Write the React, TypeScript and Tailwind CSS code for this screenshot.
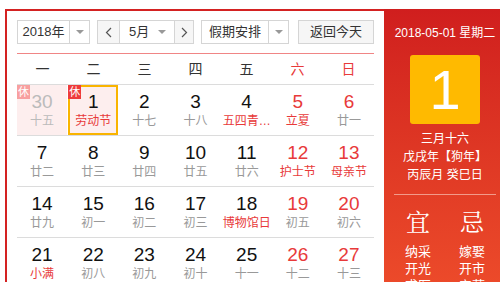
import React from "react";

type Cell = {
  d: number;
  l: string;
  red?: boolean;
  lred?: boolean;
  dim?: boolean;
  rest?: "light" | "strong";
  sel?: boolean;
};

const rows: Cell[][] = [
  [
    { d: 30, l: "十五", dim: true, rest: "light" },
    { d: 1, l: "劳动节", lred: true, rest: "strong", sel: true },
    { d: 2, l: "十七" },
    { d: 3, l: "十八" },
    { d: 4, l: "五四青…", lred: true },
    { d: 5, l: "立夏", red: true, lred: true },
    { d: 6, l: "廿一", red: true },
  ],
  [
    { d: 7, l: "廿二" },
    { d: 8, l: "廿三" },
    { d: 9, l: "廿四" },
    { d: 10, l: "廿五" },
    { d: 11, l: "廿六" },
    { d: 12, l: "护士节", red: true, lred: true },
    { d: 13, l: "母亲节", red: true, lred: true },
  ],
  [
    { d: 14, l: "廿九" },
    { d: 15, l: "初一" },
    { d: 16, l: "初二" },
    { d: 17, l: "初三" },
    { d: 18, l: "博物馆日", lred: true },
    { d: 19, l: "初五", red: true },
    { d: 20, l: "初六", red: true },
  ],
  [
    { d: 21, l: "小满", lred: true },
    { d: 22, l: "初八" },
    { d: 23, l: "初九" },
    { d: 24, l: "初十" },
    { d: 25, l: "十一" },
    { d: 26, l: "十二", red: true },
    { d: 27, l: "十三", red: true },
  ],
];

const weeks = ["一", "二", "三", "四", "五", "六", "日"];

function Caret() {
  return (
    <svg width="8" height="5" viewBox="0 0 8 5">
      <path d="M0 0 L8 0 L4 4 Z" fill="#999" />
    </svg>
  );
}

function Chevron({ dir }: { dir: "l" | "r" }) {
  return (
    <svg width="7" height="11" viewBox="0 0 7 11">
      <path
        d={dir === "l" ? "M6 1 L1.5 5.5 L6 10" : "M1 1 L5.5 5.5 L1 10"}
        stroke="#555"
        strokeWidth="1.2"
        fill="none"
      />
    </svg>
  );
}

export default function App() {
  const font = { fontFamily: '"Liberation Sans", Arial, "Noto Sans CJK SC", sans-serif' };
  const serif = { fontFamily: '"Noto Serif CJK SC", "Noto Sans CJK SC", serif' };
  return (
    <div className="w-[500px] h-[282px] overflow-hidden bg-white pl-[5px] pt-[9px]" style={font}>
      <div className="flex w-[510px] border-2 border-[#d42222] border-r-0">
        {/* left calendar */}
        <div className="w-[377px] shrink-0 px-[10px] pt-[9px]">
          <div className="flex h-[24px] items-stretch text-[13px] text-[#333]">
            <div className="flex w-[73px] border border-[#d5d5d5]">
              <div className="flex w-[51px] items-center justify-center">2018年</div>
              <div className="flex flex-1 items-center justify-center border-l border-[#d5d5d5]">
                <Caret />
              </div>
            </div>
            <div className="ml-[7px] flex w-[97px] border border-[#d5d5d5]">
              <div className="flex w-[21px] items-center justify-center bg-[#f6f6f6]">
                <Chevron dir="l" />
              </div>
              <div className="flex w-[56px] items-center border-l border-r border-[#d5d5d5] pl-[9px]">
                <span>5月</span>
                <span className="ml-auto mr-[8px]">
                  <Caret />
                </span>
              </div>
              <div className="flex flex-1 items-center justify-center bg-[#f6f6f6]">
                <Chevron dir="r" />
              </div>
            </div>
            <div className="ml-[7px] flex w-[88px] border border-[#d5d5d5]">
              <div className="flex w-[66px] items-center justify-center">假期安排</div>
              <div className="flex flex-1 items-center justify-center border-l border-[#d5d5d5]">
                <Caret />
              </div>
            </div>
            <div className="ml-[9px] flex w-[76px] items-center justify-center border border-[#d5d5d5] bg-[#f6f6f6]">
              返回今天
            </div>
          </div>
          <div className="mt-[9px] h-px bg-[#f08585]" />
          <div className="grid h-[31px] grid-cols-7 items-center border-b border-[#dcdcdc] text-[14px] text-[#333]">
            {weeks.map((w, i) => (
              <div key={w} className={`text-center ${i >= 5 ? "text-[#e83a3a]" : ""}`}>
                {w}
              </div>
            ))}
          </div>
          {rows.map((row, ri) => (
            <div key={ri} className="grid h-[51px] grid-cols-7 gap-x-px border-b border-[#dcdcdc]">
              {row.map((c) => (
                <div
                  key={c.d}
                  className={`relative flex flex-col items-center ${
                    c.rest ? "bg-[#fdeeee]" : ""
                  } ${c.sel ? "border-2 border-[#f9b400] pt-[4px]" : "pt-[6px]"}`}
                >
                  {c.rest && (
                    <div
                      className={`absolute flex h-[14px] w-[13px] items-center justify-center text-[11px] leading-none text-white ${
                        c.sel ? "-left-[2px] -top-[2px]" : "left-0 top-0"
                      } ${c.rest === "strong" ? "bg-[#ee3b3b]" : "bg-[#f8a0a0]"}`}
                    >
                      休
                    </div>
                  )}
                  <div
                    className={`text-[19px] leading-[22px] ${
                      c.dim ? "text-[#bbb]" : c.red ? "text-[#e83a3a]" : "text-[#111]"
                    }`}
                  >
                    {c.d}
                  </div>
                  <div
                    className={`whitespace-nowrap text-[12px] leading-[16px] ${
                      c.lred ? "text-[#e83a3a]" : c.dim ? "text-[#bbb]" : "text-[#999]"
                    }`}
                  >
                    {c.l}
                  </div>
                </div>
              ))}
            </div>
          ))}
        </div>
        {/* right panel */}
        <div className="-mt-[2px] flex h-[275px] w-[122px] shrink-0 flex-col items-center overflow-hidden bg-gradient-to-b from-[#d01e1e] to-[#ec4a2a] text-white">
          <div className="mt-[16px] shrink-0 text-[12px] leading-[16px]">2018-05-01 星期二</div>
          <div className="mt-[14px] flex h-[69px] w-[70px] shrink-0 items-center justify-center rounded-[3px] bg-[#ffba00] text-[56px] leading-none">
            1
          </div>
          <div className="mt-[6px] shrink-0 text-[12px] leading-[18px]">三月十六</div>
          <div className="shrink-0 text-[12px] leading-[18px]">戊戌年【狗年】</div>
          <div className="shrink-0 text-[12px] leading-[18px]">丙辰月 癸巳日</div>
          <div className="mt-[10px] h-px w-[102px] shrink-0 bg-[#f29a8a]" />
          <div className="mt-[12px] flex w-full shrink-0 justify-center gap-[28px]">
            <div className="flex flex-col items-center">
              <div className="text-[24px] leading-[28px]" style={serif}>宜</div>
              <div className="mt-[8px] text-[13px] leading-[17px]">纳采</div>
              <div className="text-[13px] leading-[17px]">开光</div>
              <div className="text-[13px] leading-[17px]">求医</div>
            </div>
            <div className="flex flex-col items-center">
              <div className="text-[24px] leading-[28px]" style={serif}>忌</div>
              <div className="mt-[8px] text-[13px] leading-[17px]">嫁娶</div>
              <div className="text-[13px] leading-[17px]">开市</div>
              <div className="text-[13px] leading-[17px]">安葬</div>
            </div>
          </div>
        </div>
      </div>
    </div>
  );
}
